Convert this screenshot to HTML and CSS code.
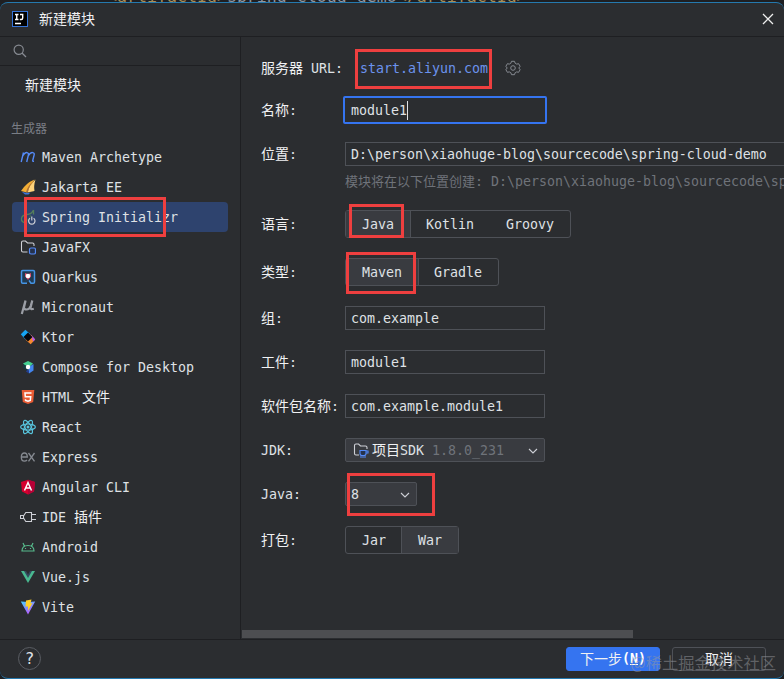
FILE: index.html
```html
<!DOCTYPE html>
<html lang="zh-CN">
<head>
<meta charset="utf-8">
<title>新建模块</title>
<link rel="stylesheet" href="styles.css">
</head>
<body>
<div class="editor">&lt;artifactId&gt;<span class="editor-value">spring-cloud-demo</span>&lt;/artifactId&gt;</div>
<div class="dialog">
  <header class="titlebar">
    <svg class="app-icon" viewBox="0 0 16 16"><rect x=".5" y=".5" width="15" height="15" fill="#000" stroke="#3574d8"/><path d="M3 3.500h3.500M4.750 3.500v5M3 8.500h3.500M8 3.500h2.700v3.500q0 1.500-1.500 1.500H7.800M3 12.500h6" fill="none" stroke="#fff" stroke-width="1.400"/></svg>
    <h1 class="zh">新建模块</h1>
    <svg class="close" viewBox="0 0 12 12"><path d="M1 1l10 10M11 1L1 11" stroke="#eee" stroke-width="1.300"/></svg>
  </header>
  <div class="body">
    <aside class="sidebar">
      <div class="search"><svg viewBox="0 0 14 14"><circle cx="5.700" cy="5.700" r="4.600" fill="none" stroke="#868a91" stroke-width="1.200"/><path d="M9 9l4 4" stroke="#868a91" stroke-width="1.300"/></svg></div>
      <div class="new-module zh">新建模块</div>
      <div class="group-title">生成器</div>
      <ul class="generators">
        <li><svg viewBox="0 0 16 16"><path d="M1.200 13L3.500 3.500M2.700 7Q5 3.200 7 3.600T8.300 6.500L6.700 13M8.200 7Q10.500 3.200 12.700 3.600T14 6.500L12.700 11.500Q12.500 12.600 14 12.300" fill="none" stroke="#548af7" stroke-width="1.400"/></svg>Maven Archetype</li>
        <li><svg viewBox="0 0 16 16"><path d="M14.500.500Q6 4 1 12L7 13.500Z" fill="#f2ad35"/><path d="M15.500.500Q9.500 6 7.500 13.500L14.500 12Q13.500 7 15.500.500Z" fill="#ffd37a"/><path d="M13.500 2Q7.500 7 6 13.200l1.800.3Q9 7 13.500 2Z" fill="#a97039"/><path d="M2 13l5.500 1 3-.5-2 2H5Z" fill="#3f76dc"/></svg>Jakarta EE</li>
        <li class="selected"><svg viewBox="0 0 16 16"><path d="M13.500 1v4.500M7 14Q1 13.800 1.500 9.500 2 6 7 5.500 11.500 5.500 13.500 1" fill="none" stroke="#55805a" stroke-width="1.300"/><path d="M3 12.500Q9 12 11 6" fill="none" stroke="#426d50"/><path d="M10 9.300a3.200 3.200 0 1 0 3.600 0M11.800 7.500v4" fill="none" stroke="#ced0d6" stroke-width="1.200"/></svg>Spring Initializr</li>
        <li><svg viewBox="0 0 16 16"><path d="M7.500 13H3Q1.500 13 1.500 11.500V3.500Q1.500 2 3 2h2.500L7.500 4h5Q14 4 14 5.500V7" fill="none" stroke="#ced0d6" stroke-width="1.100"/><rect x="9.500" y="9" width="6" height="6" rx="1.500" fill="#25324d" stroke="#548af7" stroke-width="1.200"/></svg>JavaFX</li>
        <li><svg viewBox="0 0 16 16"><path d="M7 14.300H2.700Q1.500 14.300 1.500 13V2.700Q1.500 1.500 2.700 1.500h10.600Q14.500 1.500 14.500 2.700V13Q14.500 14.300 13.300 14.300H11L9 11.500" fill="#213b53" stroke="#4595e6" stroke-width="1.500"/><path d="M5 4l3 1 3-1v3.500L8 11 5 7.500Z" fill="#dc4b69"/><circle cx="8" cy="7" r="2.300" fill="#fff"/></svg>Quarkus</li>
        <li><svg viewBox="0 0 16 16"><path d="M5.500 1.500L1.800 15M5.500 2L4 8.200Q3.800 10.500 6.500 10.500 9.500 10.500 10.700 7L12.300 1.500 10.600 8.500Q10.200 11 13.800 9.800" fill="none" stroke="#9b9ea5" stroke-width="2.200"/></svg>Micronaut</li>
        <li><svg viewBox="0 0 16 16"><path d="M.8 5.300L5.300.800l5.200 4.500L5.300 10.500Z" fill="#16a5f3"/><path d="M5.500 10.700l5.200-5.200 4.500 5-4.500 4.700Z" fill="#f58830"/><path d="M10.700 5.500l4.500 5-2 2Z" fill="#b35bf0"/><path d="M8 3.500L12.500 8 8 12.500 3.500 8Z" fill="#08080b"/></svg>Ktor</li>
        <li><svg viewBox="0 0 16 16"><path d="M3 4.500l5-2.500 5 2.500-5 5Z" fill="#43cf91"/><path d="M13.500 5v6.500l-4.500 3-1-6Z" fill="#4385ed"/><path d="M3 5v4l4 3 2-4Z" fill="#163a40"/><path d="M8 10l1 4.500-3-2Z" fill="#243d91"/><circle cx="8" cy="8" r="2.200" fill="#fff"/></svg>Compose for Desktop</li>
        <li><svg viewBox="0 0 16 16"><path d="M1.700 1h12.600l-1.100 12L8 15l-5.200-2Z" fill="#e95c35"/><path d="M11.500 4H5l.3 3.700h5.400l-.4 3.800L8 12.300l-2.400-.8-.1-1.300" fill="none" stroke="#fff" stroke-width="1.500"/></svg>HTML <span class="zh">文件</span></li>
        <li><svg viewBox="0 0 16 16"><g fill="none" stroke="#58c4dc" stroke-width="1.200"><ellipse cx="8" cy="8" rx="7.400" ry="3"/><ellipse cx="8" cy="8" rx="7.400" ry="3" transform="rotate(60 8 8)"/><ellipse cx="8" cy="8" rx="7.400" ry="3" transform="rotate(120 8 8)"/></g><circle cx="8" cy="8" r="1.500" fill="#58c4dc"/></svg>React</li>
        <li><svg viewBox="0 0 16 16"><path d="M1.300 8h6Q7.300 4 4.400 4T1.300 8q0 4.200 3.100 4.200Q6 12.200 7 11M8.500 4l6 8.300M14.500 4l-6 8.300" fill="none" stroke="#868a91" stroke-width="1.300"/></svg>Express</li>
        <li><svg viewBox="0 0 16 16"><path d="M8 .7l7 2.300-1 9.500-6 3-6-3L1 3Z" fill="#d6002f"/><path d="M8 .7l7 2.300-1 9.500-6 3Z" fill="#b60036"/><path d="M4.500 11.500L8 3.500l3.500 8M5.700 9h4.600" fill="none" stroke="#fff" stroke-width="1.500"/></svg>Angular CLI</li>
        <li><svg viewBox="0 0 16 16"><path d="M3.500 7L5.800 3.500H11.500v9H5.800L3.500 9M.5 6.500h3v3h-3ZM11.500 5.500H16M11.500 10.500H16" fill="none" stroke="#ced0d6" stroke-width="1.100"/></svg>IDE <span class="zh">插件</span></li>
        <li><svg viewBox="0 0 16 16"><path d="M2 12q0-5.500 6-5.500t6 5.500ZM4.500 7.300L3 4M11.500 7.300L13 4M5.500 9v1M10.500 9v1" fill="none" stroke="#57b98b" stroke-width="1.200"/></svg>Android</li>
        <li><svg viewBox="0 0 16 16"><path d="M1 2h14L8 14Z" fill="#49b890"/><path d="M4 2h8L8 9Z" fill="#35495e"/><path d="M6 2h4L8 5.500Z" fill="#2b2d30"/></svg>Vue.js</li>
        <li><svg viewBox="0 0 16 16"><defs><linearGradient id="vite" x1="0" y1="0" x2=".6" y2="1"><stop stop-color="#41d1ff"/><stop offset="1" stop-color="#bd54fe"/></linearGradient></defs><path d="M.8 2.500L8 3l7.200-.5L8 15.500Z" fill="url(#vite)"/><path d="M6 1.500L11.500.500 10.500 4.500l2-.4L8 12V7.500H5.500Z" fill="#ffd028"/></svg>Vite</li>
      </ul>
    </aside>
    <main class="content">
      <form class="form">
        <div class="row tall"><label class="wide-label"><span class="zh">服务器</span> URL:</label><a class="url">start.aliyun.com</a>
          <svg class="gear" viewBox="0 0 16 16"><path d="M6.500 1.300h3l.6 1.900 1.600.9 1.900-.4 1.500 2.600L13.800 8l1.300 1.700-1.500 2.600-1.900-.4-1.600.9-.6 1.900h-3l-.6-1.900-1.600-.9-1.900.4L.9 9.700 2.200 8 .9 6.300l1.500-2.600 1.900.4 1.600-.9Z" transform="rotate(0 8 8)" fill="none" stroke="#868a91"/><circle cx="8" cy="8" r="2.300" fill="none" stroke="#868a91"/></svg></div>
        <div class="row tall name"><label><span class="zh">名称</span>:</label><div class="input focused">module1<i class="caret"></i></div></div>
        <div class="row location"><label><span class="zh">位置</span>:</label><div class="input long">D:\person\xiaohuge-blog\sourcecode\spring-cloud-demo</div></div>
        <div class="hint"><span>模块将在以下位置创建</span>: D:\person\xiaohuge-blog\sourcecode\spring-cloud-demo</div>
        <div class="row tall"><label><span class="zh">语言</span>:</label><div class="segments"><span class="on">Java</span><span>Kotlin</span><span>Groovy</span></div></div>
        <div class="row tall"><label><span class="zh">类型</span>:</label><div class="segments"><span class="on">Maven</span><span>Gradle</span></div></div>
        <div class="row"><label><span class="zh">组</span>:</label><div class="input">com.example</div></div>
        <div class="row"><label><span class="zh">工件</span>:</label><div class="input">module1</div></div>
        <div class="row"><label><span class="zh">软件包名称</span>:</label><div class="input">com.example.module1</div></div>
        <div class="row"><label class="latin">JDK:</label><div class="select"><svg class="sdk" viewBox="0 0 16 16"><path d="M6 13H3Q1.500 13 1.500 11.500V3.500Q1.500 2 3 2h2.500L7.500 4h5Q14 4 14 5.500V7" fill="none" stroke="#ced0d6" stroke-width="1.100"/><path d="M7 8.500h6v3q0 2-2 2H9q-2 0-2-2ZM13 9h2v2h-2M7 15h6" fill="#25324d" stroke="#548af7" stroke-width="1.100"/></svg><span class="zh">项目</span><span class="value">SDK <em>1.8.0_231</em></span><svg class="chevron" viewBox="0 0 10 6"><path d="M1 1l4 4 4-4" fill="none" stroke="#ced0d6" stroke-width="1.100"/></svg></div></div>
        <div class="row"><label class="latin">Java:</label><div class="select short"><span class="value">8</span><svg class="chevron" viewBox="0 0 10 6"><path d="M1 1l4 4 4-4" fill="none" stroke="#ced0d6" stroke-width="1.100"/></svg></div></div>
        <div class="row tall"><label><span class="zh">打包</span>:</label><div class="segments"><span>Jar</span><span class="on last">War</span></div></div>
      </form>
      <div class="scrollbar"></div>
    </main>
  </div>
  <footer class="footer">
    <div class="help">?</div>
    <div class="button primary"><span class="zh">下一步</span><b>(<u>N</u>)</b></div>
    <div class="button"><span class="zh">取消</span></div>
  </footer>
</div>
<div class="mark mark-url"></div>
<div class="mark mark-spring"></div>
<div class="mark mark-java"></div>
<div class="mark mark-maven"></div>
<div class="mark mark-version"></div>
<div class="watermark">@稀土掘金技术社区</div>
</body>
</html>
```
FILE: styles.css
```css
* { box-sizing: border-box; }
body {
  margin: 0;
  width: 784px;
  height: 679px;
  overflow: hidden;
  position: relative;
  background: #1e1f22;
  color: #dfe1e5;
  font-family: "DejaVu Sans Mono", "Noto Sans CJK SC", monospace;
  font-size: 13.29px;
  line-height: 20px;
  white-space: nowrap;
}
svg { display: block; flex: none; }
.zh { font-family: "Noto Sans CJK SC", sans-serif; font-size: 14px; font-weight: 400; color: #f0f1f3; }
.editor {
  position: absolute;
  top: -12px;
  left: 107px;
  font-size: 16.6px;
  line-height: 18px;
  color: #a98e58;
}
.editor-value { color: #8f959f; }
.dialog {
  position: relative;
  top: 2px;
  display: flex;
  flex-direction: column;
  height: 677px;
  background: #2b2d30;
  border-top: 1px solid #2579ae;
  border-bottom: 1px solid #2579ae;
  border-radius: 8px;
  overflow: hidden;
}
.titlebar {
  display: flex;
  align-items: center;
  height: 34px;
  padding: 0 10px 2px 12px;
  border-bottom: 1px solid #1e1f22;
}
.app-icon { width: 16px; height: 16px; margin-right: 11px; }
.titlebar h1 { margin: -2px 0 0; line-height: 20px; }
.close { width: 12px; height: 12px; margin-left: auto; }
.body { display: flex; flex: 1; min-height: 0; }
.sidebar { width: 241px; border-right: 1px solid #1e1f22; }
.search { height: 29px; padding: 7px 13px; border-bottom: 1px solid #1e1f22; }
.search svg { width: 14px; height: 14px; }
.new-module { padding: 8px 0 0 25px; }
.group-title { margin-top: 25px; padding-left: 11px; font-size: 12px; color: #7a7e85; }
.generators { list-style: none; margin: 3px 12px 0; padding: 0; }
.generators li {
  display: flex;
  align-items: center;
  height: 30px;
  padding: 2px 0 0 8px;
  border-radius: 4px;
  white-space: pre;
}
.generators svg { width: 16px; height: 16px; margin: -2px 6px 0 0; }
.generators .zh { margin-top: -4px; }
.generators .selected { background: #2e436e; }
.content { flex: 1; min-width: 0; display: flex; flex-direction: column; overflow: hidden; }
.form { padding: 17px 0 0 20px; flex: 1; }
.row { display: flex; align-items: center; height: 24px; margin-bottom: 20px; }
.row.tall { height: 28px; }
.form > .row:first-child { margin-bottom: 14px; }
.form > .name { margin-bottom: 18px; }
.form > .location { margin-bottom: 7px; }
.row label { flex: none; width: 84px; white-space: pre; }
.row .wide-label { width: 99px; }
.latin, .url, .value { padding-top: 2px; }
.url { color: #6b93ee; }
.gear { width: 16px; height: 16px; margin-left: 17px; }
.input {
  display: flex;
  align-items: center;
  flex: none;
  width: 200px;
  height: 24px;
  padding: 2px 0 0 5px;
  border: 1px solid #4e5157;
}
.input.focused {
  width: 204px;
  height: 28px;
  margin-left: -2px;
  padding-left: 6px;
  border: 2px solid #3574f0;
  border-radius: 2px;
}
.caret { width: 1px; height: 19px; margin-top: -2px; background: #dfe1e5; }
.input.long { width: 460px; }
.hint { height: 16px; margin: 0 0 21px 84px; line-height: 17px; color: #6f737a; }
.hint span { font-size: 13px; }
.segments { display: flex; height: 28px; border: 1px solid #4e5157; border-radius: 3px; }
.segments span { padding: 4px 16px 2px; }
.segments .on { background: #393b40; box-shadow: 1px 0 #4e5157; }
.segments .last { box-shadow: -1px 0 #4e5157; }
.select {
  display: flex;
  align-items: center;
  width: 200px;
  height: 24px;
  padding: 0 6px 0 5px;
  background: #393b40;
  border: 1px solid #4e5157;
  border-radius: 2px;
  white-space: pre;
}
.select.short { width: 72px; }
.select .zh { margin-top: -2px; }
.select em { font-style: normal; color: #6f737a; }
.sdk { width: 16px; height: 16px; margin: 0 3px 0 2px; }
.chevron { width: 10px; height: 6px; margin: 1px 0 0 auto; }
.scrollbar { width: 391px; height: 8px; margin: 0 0 1px 1px; background: #4d4e51; }
.footer {
  display: flex;
  align-items: center;
  height: 39px;
  padding: 0 18px;
  border-top: 1px solid #1e1f22;
}
.help {
  width: 23px;
  height: 23px;
  margin: -1px auto 0 0;
  border: 1px solid #5a5d63;
  border-radius: 50%;
  text-align: center;
  line-height: 21px;
  font-size: 16px;
}
.button {
  display: flex;
  align-items: center;
  justify-content: center;
  width: 94px;
  height: 24px;
  margin-left: 12px;
  border: 1px solid #4e5157;
  border-radius: 3px;
}
.button .zh { margin-top: -2px; }
.primary { background: #3574f0; border-color: #3574f0; color: #fff; }
.mark { position: absolute; border: 3px solid #ee3f3f; }
.mark-url { left: 355px; top: 49px; width: 137px; height: 40px; }
.mark-spring { left: 24px; top: 197px; width: 142px; height: 40px; }
.mark-java { left: 349px; top: 204px; width: 55px; height: 34px; }
.mark-maven { left: 346px; top: 252px; width: 70px; height: 42px; }
.mark-version { left: 347px; top: 473px; width: 88px; height: 43px; }
.watermark {
  position: absolute;
  right: 8px;
  top: 652px;
  font: 16.3px/20px "Noto Sans CJK SC", sans-serif;
  color: rgba(150, 152, 156, .5);
}
```
